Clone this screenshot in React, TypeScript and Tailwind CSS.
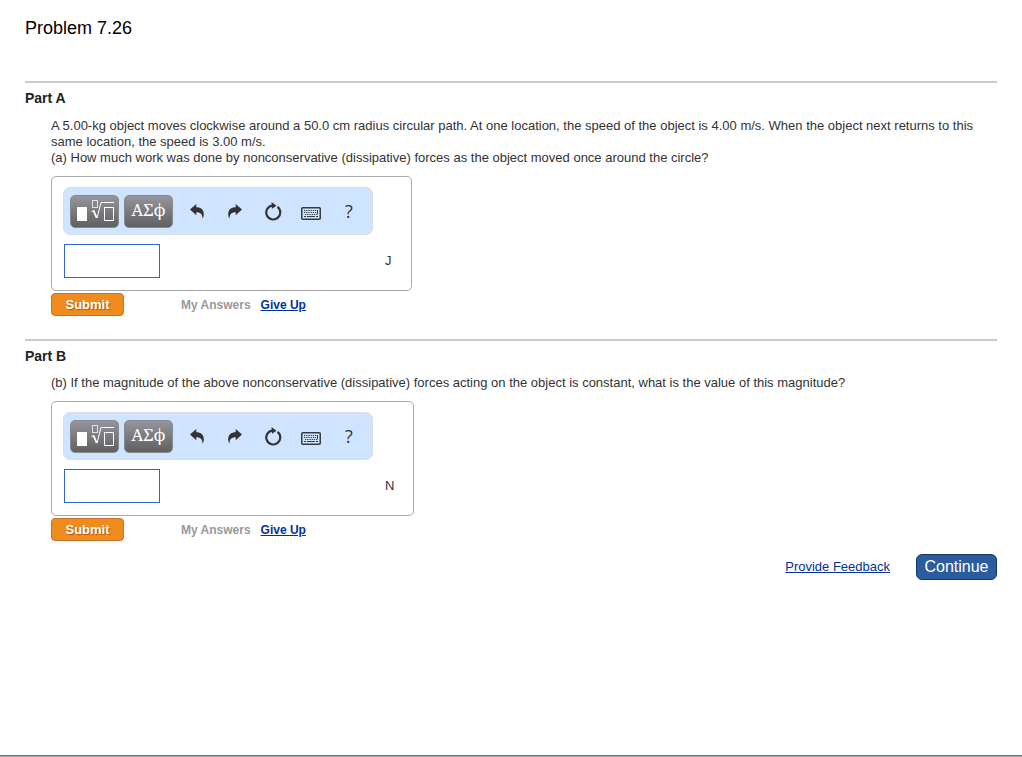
import React from "react";

function TemplatesIcon() {
  return (
    <svg width="38" height="22" viewBox="0 0 38 22" fill="none" aria-hidden="true">
      <rect x="0" y="7" width="10" height="14" fill="#fff" />
      <rect x="15.5" y="0.5" width="5" height="7" stroke="#e2e2e4" />
      <path d="M14.500 11.500l2-1 3.500 7.500L24 2.500H37" stroke="#fff" />
      <path d="M16.500 10.500l3.200 7.500" stroke="#fff" strokeWidth="1.800" />
      <rect x="27.500" y="7.500" width="9" height="13" stroke="#fff" />
    </svg>
  );
}

function ArrowIcon({ flip }: { flip?: boolean }) {
  return (
    <svg width="14" height="15" viewBox="0 0 14 15" className={flip ? "-scale-x-100" : ""} aria-hidden="true">
      <path d="M0 5.500L6.300 0v3.300C11 3.300 13.800 6 13.800 10c0 2-.5 3.600-1.300 4.800.2-4-1.700-6.600-6.200-6.600v3z" fill="#333" />
    </svg>
  );
}

function ResetIcon() {
  return (
    <svg width="18" height="19" viewBox="0 0 18 19" fill="none" aria-hidden="true">
      <path d="M13.500 4.900A7 7 0 1 1 8 3.600" stroke="#333" strokeWidth="2.200" />
      <path d="M7.500 0l5 3.700-4.500 3z" fill="#333" />
    </svg>
  );
}

function KeyboardIcon() {
  return (
    <svg width="20" height="13" viewBox="0 0 20 13" fill="none" aria-hidden="true">
      <rect x="0.750" y="0.750" width="18.500" height="11.500" rx="1" stroke="#333b44" strokeWidth="1.500" />
      <path d="M3 3.500h14M3 5.500h12M4 7.500h13" stroke="#333b44" strokeDasharray="1.300 0.900" />
      <path d="M3 9.500h2M6 9.500h8M15 9.500h2M16.500 3v4" stroke="#333b44" />
    </svg>
  );
}

const iconButton = "flex h-8 w-[38px] items-center justify-center";
const greyButton =
  "flex h-[33px] w-[49px] items-center justify-center rounded-[5px] border border-[#8a8a8e] bg-linear-to-b from-[#96959e] to-[#606060] text-white";

function AnswerBox({ id, unit, wide }: { id: string; unit: string; wide?: boolean }) {
  return (
    <div className={`${wide ? "w-[363px]" : "w-[361px]"} max-w-full rounded-[5px] border border-[#a9a9a9] px-[11px] pt-[10px] pb-3`}>
      <div className="flex h-12 w-[310px] items-center rounded-[7px] border border-[#d9dce2] bg-[#cfe5ff] pl-[6px]">
        <button type="button" aria-label="Templates" className={`${greyButton} pl-[2px]`}>
          <TemplatesIcon />
        </button>
        <button
          type="button"
          aria-label="Symbols"
          className={`${greyButton} ml-[5px] pb-[2px] font-['Noto_Serif','DejaVu_Serif','Liberation_Serif',serif] text-[17px]`}
        >
          ΑΣϕ
        </button>
        <div className="ml-[5px] flex items-center">
          <button type="button" aria-label="Undo" className={iconButton}><ArrowIcon /></button>
          <button type="button" aria-label="Redo" className={iconButton}><ArrowIcon flip /></button>
          <button type="button" aria-label="Reset" className={iconButton}><ResetIcon /></button>
          <button type="button" aria-label="Keyboard shortcuts" className={`${iconButton} pt-1`}><KeyboardIcon /></button>
          <button type="button" aria-label="Help" className={`${iconButton} font-['Open_Sans',sans-serif] text-lg text-[#333]`}>?</button>
        </div>
      </div>
      <div className="mt-[9px] flex items-center gap-[225px] pl-px">
        <input id={id} type="text" aria-label={`Answer in ${unit}`} className="h-[34px] w-24 border border-[#2f67c9] bg-white px-2 outline-none" />
        <label htmlFor={id} className="text-[#333]">{unit}</label>
      </div>
    </div>
  );
}

function Actions() {
  return (
    <div className="mt-[2px] flex items-center text-xs font-bold">
      <button
        type="button"
        className="h-[23px] w-[73px] rounded-[4px] border border-[#c9722a] bg-[#f08c1e] text-[13px] leading-4 text-white text-shadow-[1px_1px_1px_#a85a10]"
      >
        Submit
      </button>
      <span className="ml-[57px] text-[#999]">My Answers</span>
      <a href="#give-up" className="ml-[10px] text-[#039] underline">Give Up</a>
    </div>
  );
}

function Part({ title, children }: { title: string; children: React.ReactNode }) {
  return (
    <section className="border-t-2 border-[#ccc] pt-[7px]">
      <h2 className="text-sm leading-4 font-bold text-[#222]">{title}</h2>
      <div className="pl-[26px]">{children}</div>
    </section>
  );
}

export default function App() {
  return (
    <div className="flex min-h-screen flex-col justify-between bg-white font-['Liberation_Sans',Arial,sans-serif] text-[13px] leading-4 text-[#333]">
      <main className="px-[25px] pt-4">
        <h1 className="mb-[41px] text-lg leading-6 text-black">Problem 7.26</h1>
        <Part title="Part A">
          <p className="mt-3 mb-[10px]">
            A 5.00-kg object moves clockwise around a 50.0 cm radius circular path. At one location, the speed of the
            object is 4.00 m/s. When the object next returns to this same location, the speed is 3.00 m/s.
            <br />
            (a) How much work was done by nonconservative (dissipative) forces as the object moved once around the
            circle?
          </p>
          <AnswerBox id="answer-a" unit="J" />
          <Actions />
        </Part>
        <div className="h-[23px]" />
        <Part title="Part B">
          <p className="mt-[11px] mb-[10px]">
            (b) If the magnitude of the above nonconservative (dissipative) forces acting on the object is constant,
            what is the value of this magnitude?
          </p>
          <AnswerBox id="answer-b" unit="N" wide />
          <Actions />
        </Part>
        <div className="mt-[13px] flex items-center justify-end gap-[26px]">
          <a href="#feedback" className="text-[#039] underline">Provide Feedback</a>
          <button type="button" className="h-[26px] w-[81px] rounded-[6px] border border-[#0c3a6e] bg-[#2c5c9c] text-base leading-5 text-white">
            Continue
          </button>
        </div>
      </main>
      <footer>
        <div className="h-px bg-linear-to-r from-[#1883e0] to-[#2f7fb5]" />
        <div className="h-px bg-[#a9adb3]" />
      </footer>
    </div>
  );
}
